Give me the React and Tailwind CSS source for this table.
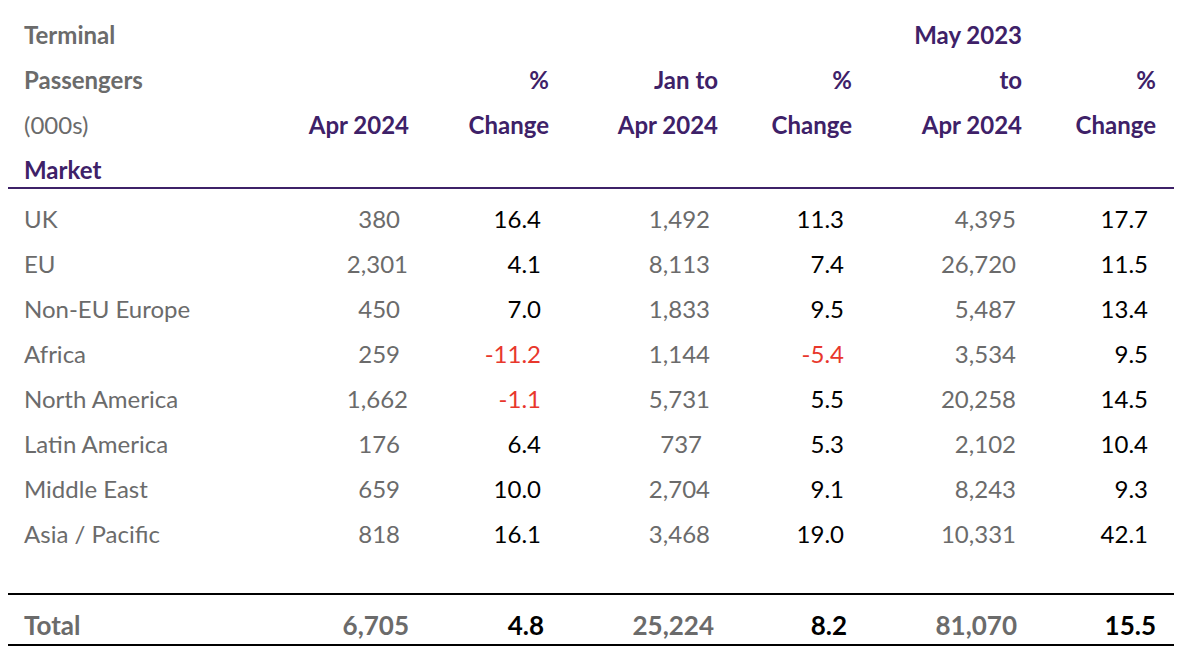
const gray = "text-[#6b6b6b]";
const purple = "text-[#3e2168]";

const rows = [
  ["UK", "380", "16.4", "1,492", "11.3", "4,395", "17.7"],
  ["EU", "2,301", "4.1", "8,113", "7.4", "26,720", "11.5"],
  ["Non-EU Europe", "450", "7.0", "1,833", "9.5", "5,487", "13.4"],
  ["Africa", "259", "-11.2", "1,144", "-5.4", "3,534", "9.5"],
  ["North America", "1,662", "-1.1", "5,731", "5.5", "20,258", "14.5"],
  ["Latin America", "176", "6.4", "737", "5.3", "2,102", "10.4"],
  ["Middle East", "659", "10.0", "2,704", "9.1", "8,243", "9.3"],
  ["Asia / Pacific", "818", "16.1", "3,468", "19.0", "10,331", "42.1"],
];

const grid =
  "grid grid-cols-[276px_109px_140px_169px_134px_170px_134px] pl-[16px]";

const countPad = (v, col) => {
  const short = !v.includes(",");
  if (col === 1) return short ? "pr-[9px]" : "pr-[1px]";
  if (col === 3) return short ? "pr-[16px]" : "pr-[8px]";
  return "pr-[6px]";
};

const Pct = ({ v }) => (
  <div
    className={`text-right pr-[8px] ${
      v.startsWith("-") ? "text-[#e8372c]" : "text-black"
    }`}
  >
    {v}
  </div>
);

const HeaderRow = ({ cells, className = "h-[45px]" }) => (
  <div className={`${grid} ${className} leading-[45px] font-bold`}>
    {cells.map((c, i) => (
      <div key={i} className={i === 0 ? c.cls : `text-right ${purple}`}>
        {i === 0 ? c.t : c}
      </div>
    ))}
  </div>
);

export default function App() {
  return (
    <div
      className="w-[1184px] h-[672px] bg-white text-[24px]"
      style={{ fontFamily: "Lato, 'Noto Sans', sans-serif" }}
    >
      <div className="w-[1166px] ml-[8px] pt-[12px]">
        <HeaderRow
          cells={[{ t: "Terminal", cls: gray }, "", "", "", "", "May 2023", ""]}
        />
        <HeaderRow
          cells={[{ t: "Passengers", cls: gray }, "", "%", "Jan to", "%", "to", "%"]}
        />
        <HeaderRow
          cells={[
            { t: "(000s)", cls: `${gray} font-normal` },
            "Apr 2024",
            "Change",
            "Apr 2024",
            "Change",
            "Apr 2024",
            "Change",
          ]}
        />
        <HeaderRow
          className="h-[40px]"
          cells={[{ t: "Market", cls: purple }, "", "", "", "", "", ""]}
        />
        <div className="h-[2px] bg-[#3e2168]" />

        <div className="pt-[7px]">
          {rows.map((r) => (
            <div key={r[0]} className={`${grid} h-[45px] leading-[45px]`}>
              <div className={gray}>{r[0]}</div>
              <div className={`text-right ${gray} ${countPad(r[1], 1)}`}>{r[1]}</div>
              <Pct v={r[2]} />
              <div className={`text-right ${gray} ${countPad(r[3], 3)}`}>{r[3]}</div>
              <Pct v={r[4]} />
              <div className={`text-right ${gray} ${countPad(r[5], 5)}`}>{r[5]}</div>
              <Pct v={r[6]} />
            </div>
          ))}
        </div>

        <div className="mt-[37px] border-t-[2px] border-b-[2px] border-black">
          <div className={`${grid} h-[49px] leading-[60px] font-bold text-[26px]`}>
            <div className={gray}>Total</div>
            <div className={`text-right ${gray}`}>6,705</div>
            <div className="text-right text-black pr-[5px]">4.8</div>
            <div className={`text-right ${gray} pr-[4px]`}>25,224</div>
            <div className="text-right text-black pr-[5px]">8.2</div>
            <div className={`text-right ${gray} pr-[5px]`}>81,070</div>
            <div className="text-right text-black">15.5</div>
          </div>
        </div>
      </div>
    </div>
  );
}
